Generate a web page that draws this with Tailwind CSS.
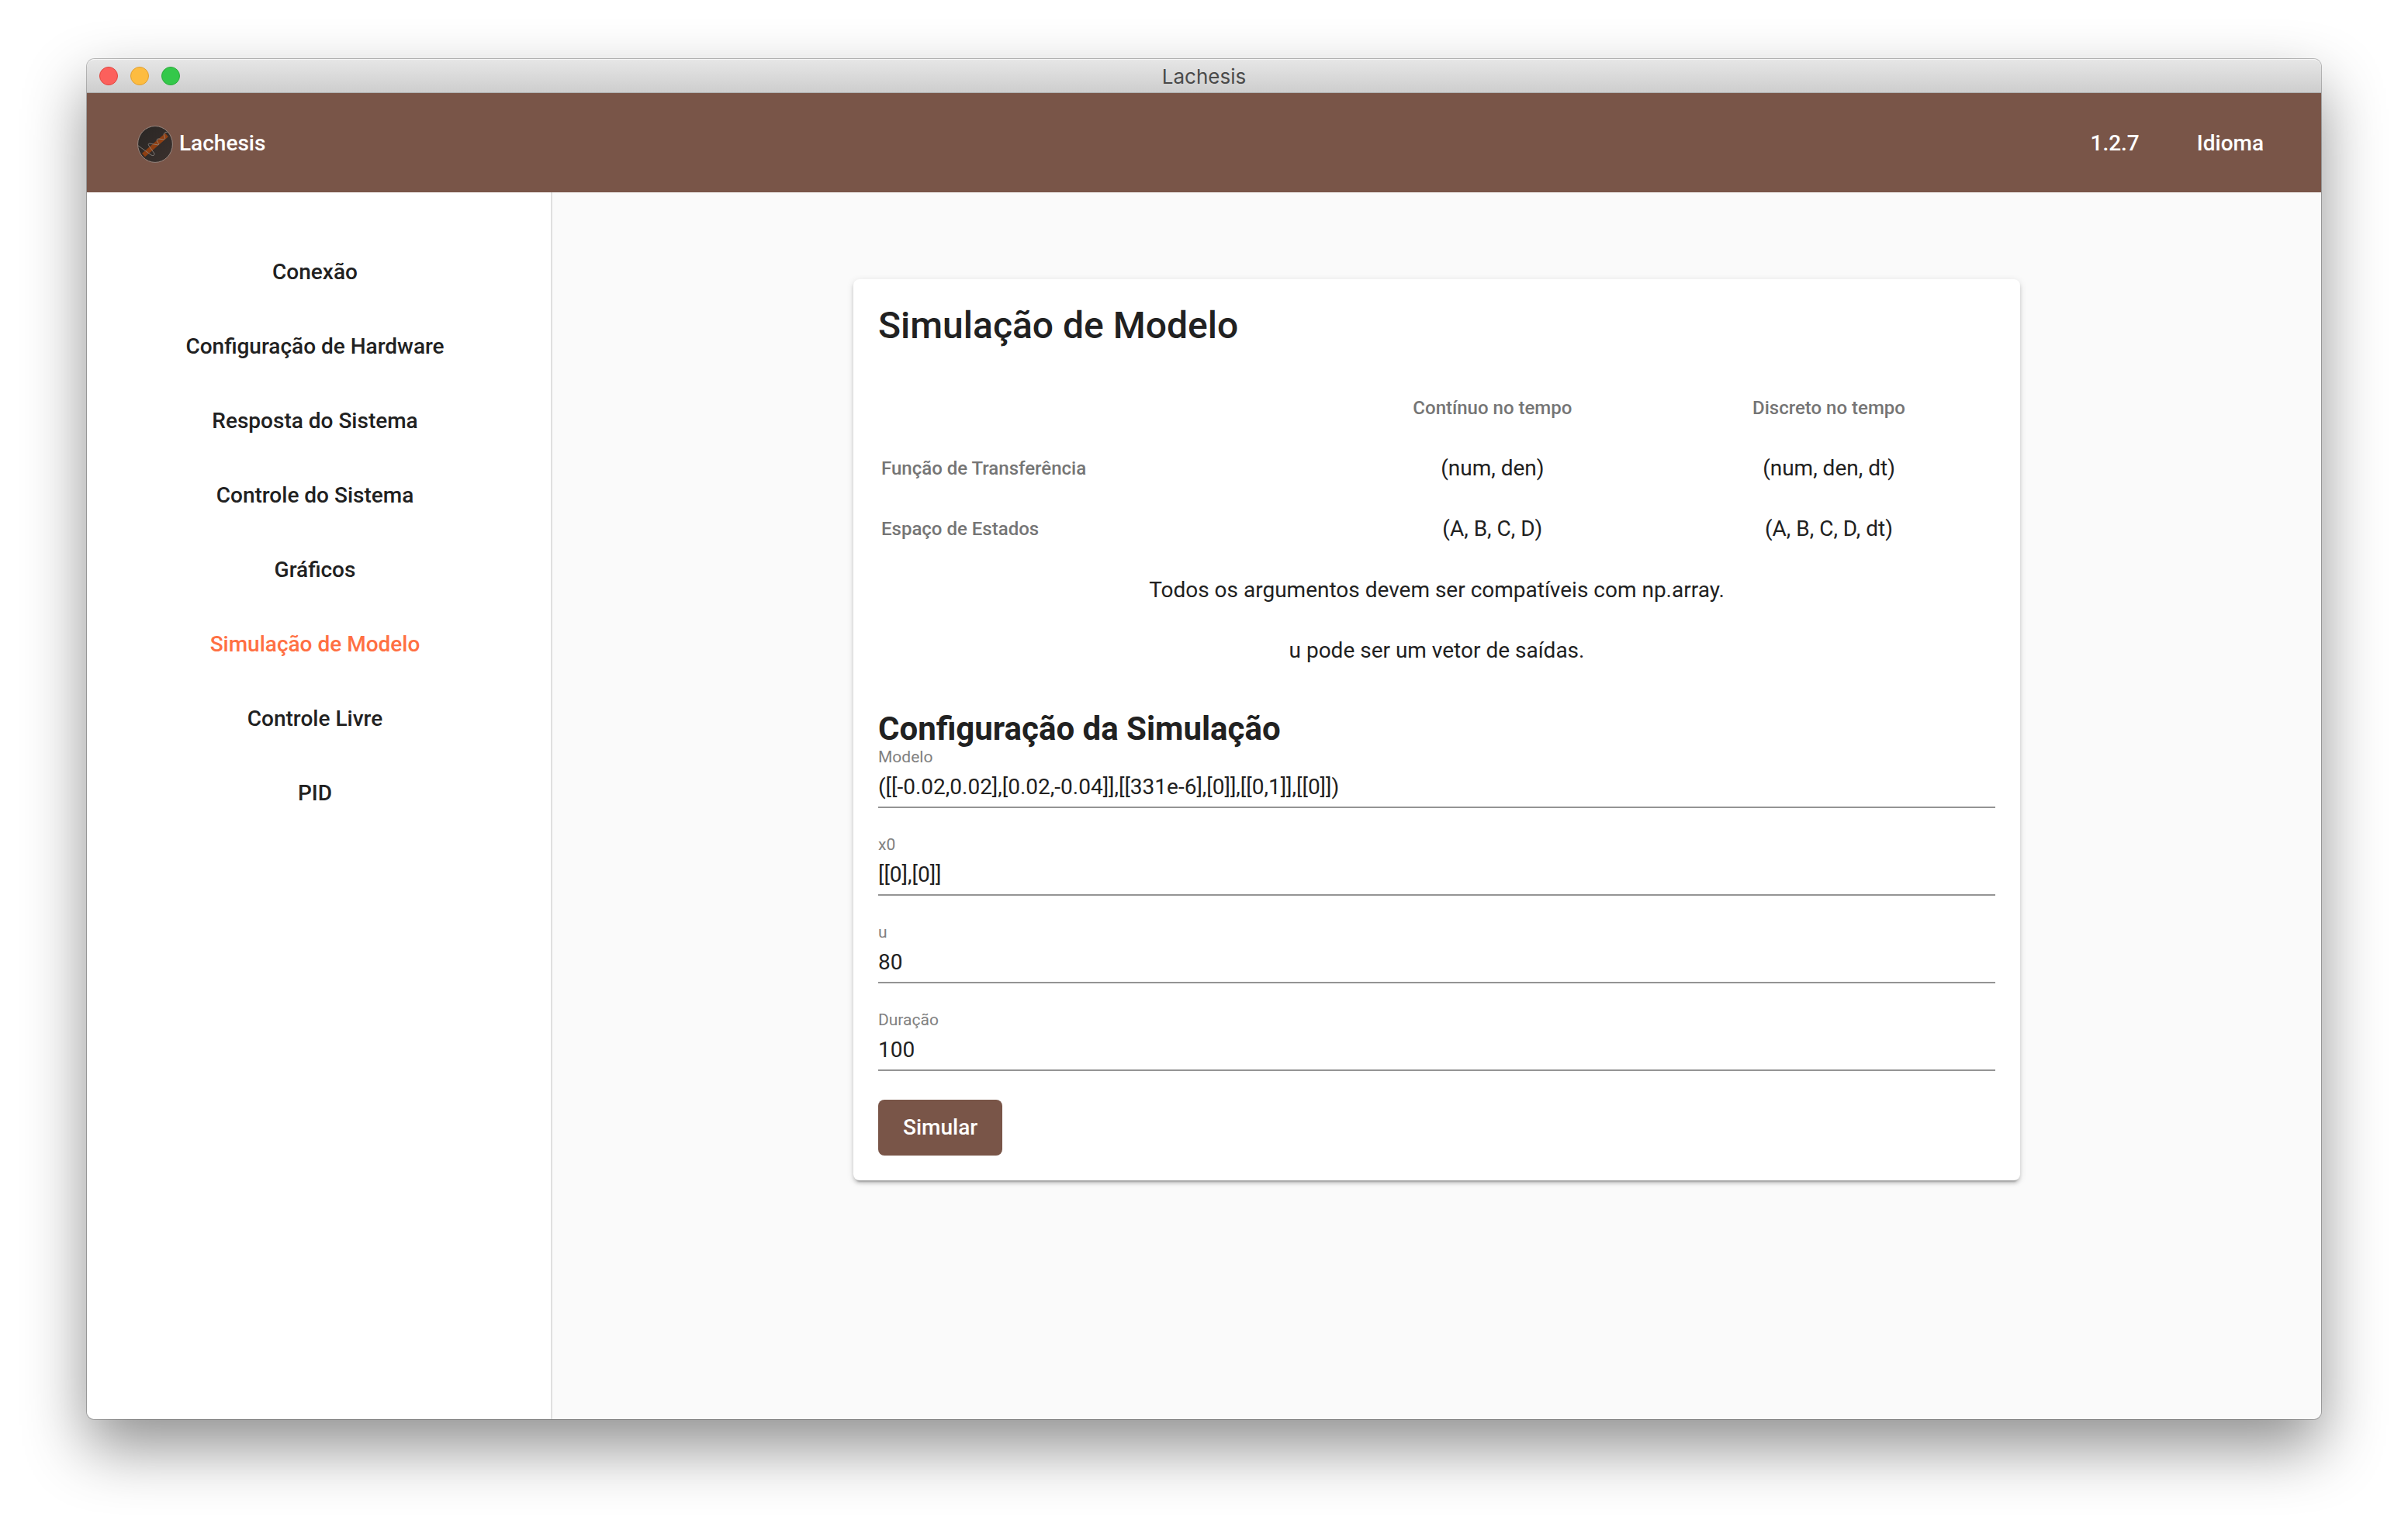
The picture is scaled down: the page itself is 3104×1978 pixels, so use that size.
<!DOCTYPE html>
<html lang="pt-BR">
<head>
<meta charset="utf-8">
<meta name="viewport" content="width=device-width, initial-scale=1">
<title>Lachesis</title>
<script src="https://cdn.jsdelivr.net/npm/@tailwindcss/browser@4"></script>
</head>
<body class="flex min-h-screen flex-col bg-white px-28 pt-[76px] pb-[148px] font-[Roboto,sans-serif] text-[28px] leading-10 text-[#212121]">
<div class="flex flex-1 flex-col rounded-[10px] shadow-[0_0_0_1px_rgba(0,0,0,0.25),0_36px_80px_rgba(0,0,0,0.44)]">

  <!-- Title bar -->
  <div class="grid h-11 grid-cols-3 items-center rounded-t-[10px] border-t border-b border-t-[#f5f5f5] border-b-[#afafaf] bg-linear-to-b from-[#e6e6e6] to-[#cecece] px-4">
    <div class="flex gap-4">
      <button type="button" aria-label="Fechar" class="size-6 rounded-full border border-[#e2463f] bg-[#fc605c]"></button>
      <button type="button" aria-label="Minimizar" class="size-6 rounded-full border border-[#e0a033] bg-[#fdbc40]"></button>
      <button type="button" aria-label="Maximizar" class="size-6 rounded-full border border-[#2dab3d] bg-[#34c84a]"></button>
    </div>
    <div class="pt-0.5 text-center font-[Inter,sans-serif] text-[26px] text-[#4a4a4a]">Lachesis</div>
  </div>

  <!-- App header -->
  <header class="flex h-32 items-center justify-between bg-[#795548] pt-0.5 pr-[74px] pl-[65px] font-medium text-white">
    <a href="#" class="flex items-center gap-2">
      <svg class="h-[50px] w-[46px]" viewBox="0 -2 46 50" fill="none" aria-hidden="true">
        <defs>
          <linearGradient id="disc" x1="0" y1="0" x2="1" y2="1"><stop offset="0" stop-color="#292624"/><stop offset="1" stop-color="#3a302d"/></linearGradient>
          <clipPath id="round"><ellipse cx="23" cy="24" rx="22" ry="23"/></clipPath>
        </defs>
        <ellipse cx="23" cy="24" rx="22.4" ry="23.4" fill="url(#disc)" stroke="#95857e" stroke-width="1"/>
        <g clip-path="url(#round)">
          <path d="M8 38 38 12" stroke="#8f3f12" stroke-width="6"/>
          <path d="M0 25 18 38Q22 40 22 36L15 26Q13 23 16 23L27 25Q29 24 26 21L25 19Q26 16 28 17L34 18Q37 17 35 14L34 11Q35 8 39 8" stroke="#8d8783" stroke-width="1" stroke-opacity="0.85"/>
        </g>
      </svg>
      <span>Lachesis</span>
    </a>
    <nav class="flex items-center gap-[74px]" aria-label="Aplicativo">
      <a href="#">1.2.7</a>
      <a href="#">Idioma</a>
    </nav>
  </header>

  <div class="flex flex-1">
    <!-- Sidebar -->
    <nav class="flex w-[600px] shrink-0 flex-col rounded-bl-[10px] border-r-2 border-[#e0e0e0] bg-white pt-[55px] pr-2.5 text-center font-medium" aria-label="Menu">
      <a href="#" class="py-7">Conexão</a>
      <a href="#" class="py-7">Configuração de Hardware</a>
      <a href="#" class="py-7">Resposta do Sistema</a>
      <a href="#" class="py-7">Controle do Sistema</a>
      <a href="#" class="py-7">Gráficos</a>
      <a href="#" aria-current="page" class="py-7 text-[#ff7043]">Simulação de Modelo</a>
      <a href="#" class="py-7">Controle Livre</a>
      <a href="#" class="py-7">PID</a>
    </nav>

    <!-- Content -->
    <main class="flex-1 rounded-br-[10px] bg-[#fafafa] py-28">
      <div class="mx-auto w-2/3 px-2">
        <section class="rounded-lg bg-white p-8 shadow-[0_6px_2px_-4px_rgba(0,0,0,0.2),0_4px_4px_rgba(0,0,0,0.14),0_2px_10px_rgba(0,0,0,0.12)]">
          <h1 class="text-[48px] leading-[56px] font-medium">Simulação de Modelo</h1>

          <table class="mt-[37px] w-full border-separate border-spacing-1 text-center">
            <thead>
              <tr class="h-[74px] text-2xl text-[#757575]">
                <td></td>
                <th scope="col" class="font-medium">Contínuo no tempo</th>
                <th scope="col" class="font-medium">Discreto no tempo</th>
              </tr>
            </thead>
            <tbody>
              <tr class="h-[74px]">
                <th scope="row" class="text-left text-2xl font-medium text-[#757575]">Função de Transferência</th>
                <td>(num, den)</td>
                <td>(num, den, dt)</td>
              </tr>
              <tr class="h-[74px]">
                <th scope="row" class="text-left text-2xl font-medium text-[#757575]">Espaço de Estados</th>
                <td>(A, B, C, D)</td>
                <td>(A, B, C, D, dt)</td>
              </tr>
            </tbody>
          </table>

          <div class="mt-[18px] flex flex-col gap-[38px] text-center">
            <p>Todos os argumentos devem ser compatíveis com np.array.</p>
            <p>u pode ser um vetor de saídas.</p>
          </div>

          <h2 class="mt-[57px] text-[42px] leading-[48px] font-bold">Configuração da Simulação</h2>
          <form>
            <div class="flex flex-col gap-[35px]">
              <div class="flex flex-col">
                <label for="modelo" class="text-[21px] leading-6 text-[#808080]">Modelo</label>
                <input id="modelo" type="text" value="([[-0.02,0.02],[0.02,-0.04]],[[331e-6],[0]],[[0,1]],[[0]])" class="h-[54px] w-full border-b-2 border-[#949494] outline-none">
              </div>
              <div class="flex flex-col">
                <label for="x0" class="text-[21px] leading-6 text-[#808080]">x0</label>
                <input id="x0" type="text" value="[[0],[0]]" class="h-[54px] w-full border-b-2 border-[#949494] outline-none">
              </div>
              <div class="flex flex-col">
                <label for="u" class="text-[21px] leading-6 text-[#808080]">u</label>
                <input id="u" type="text" value="80" class="h-[54px] w-full border-b-2 border-[#949494] outline-none">
              </div>
              <div class="flex flex-col">
                <label for="duracao" class="text-[21px] leading-6 text-[#808080]">Duração</label>
                <input id="duracao" type="text" value="100" class="h-[54px] w-full border-b-2 border-[#949494] outline-none">
              </div>
            </div>
            <button type="button" class="mt-[37px] block rounded-lg bg-[#795548] px-8 py-4 font-medium text-white">Simular</button>
          </form>
        </section>
      </div>
    </main>
  </div>
</div>
</body>
</html>
